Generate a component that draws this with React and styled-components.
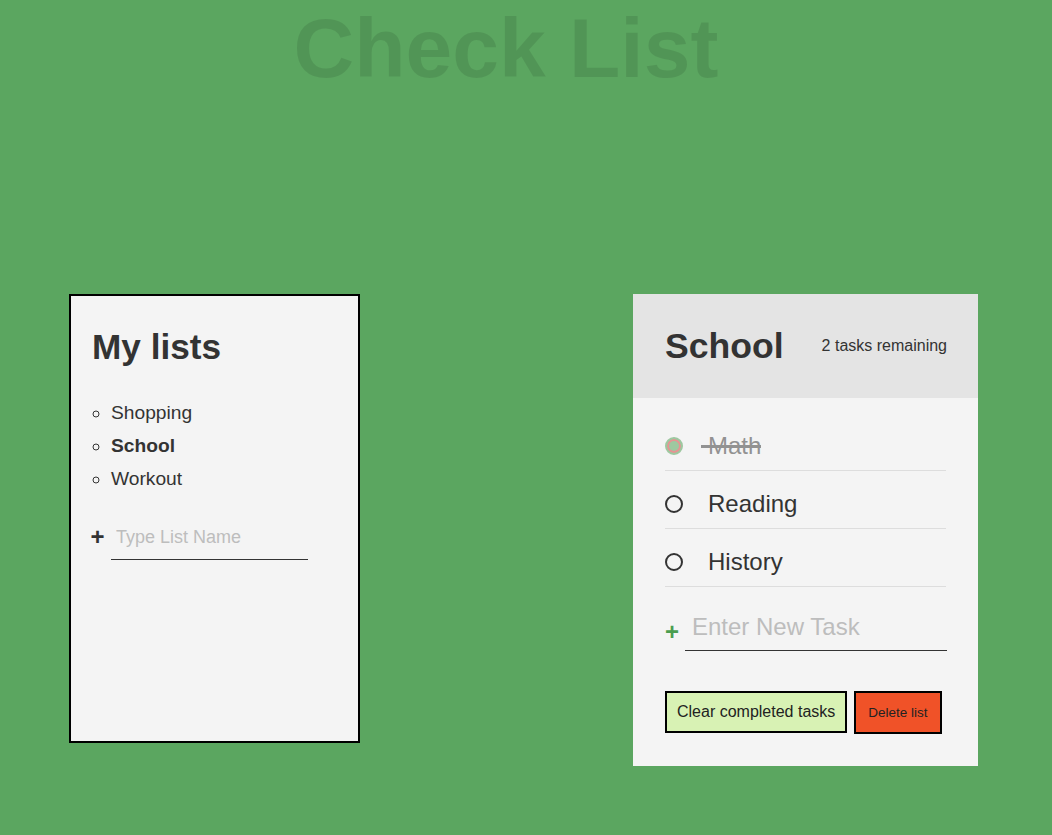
import React, { useState } from "react";
import styled, { createGlobalStyle } from "styled-components";

const GlobalStyle = createGlobalStyle`
  body {
    margin: 0;
    background: #5ba660;
    font-family: "Liberation Sans", Arial, Helvetica, sans-serif;
    color: #333;
  }
  * {
    box-sizing: border-box;
  }
`;

const Page = styled.div`
  padding-top: 6px;
  min-height: 835px;
`;

const Title = styled.h1`
  margin: 0;
  padding-right: 40px;
  text-align: center;
  font-size: 84px;
  line-height: 84px;
  font-weight: 900;
  color: rgba(0, 0, 0, 0.1);
`;

const Board = styled.main`
  display: grid;
  grid-template-columns: 291px 1fr 345px;
  align-items: start;
  margin-top: 204px;
  padding: 0 74px 0 69px;
`;

const ListsPanel = styled.section`
  grid-column: 1;
  min-height: 449px;
  padding: 30px 21px;
  background: #f4f4f4;
  border: 2px solid #000;
`;

const ListsHeading = styled.h2`
  margin: 0 0 29px;
  font-size: 35.2px;
  line-height: 1.2;
  font-weight: 700;
`;

const ListItems = styled.ul`
  margin: 0;
  padding-left: 19px;
  list-style: circle;
  font-size: 19.2px;
  line-height: 1.7;
`;

const ListName = styled.li`
  font-weight: ${(p) => (p.$active ? 700 : 400)};
  cursor: pointer;
`;

const NewForm = styled.form`
  display: flex;
  align-items: center;
  margin-top: ${(p) => p.$top}px;
`;

const CreateBtn = styled.button`
  width: ${(p) => p.$w || 20}px;
  padding: 0 6px 0 0;
  margin-left: ${(p) => p.$shift || 0}px;
  margin-bottom: ${(p) => p.$lift || 0}px;
  background: none;
  border: 0;
  font-family: inherit;
  font-size: 24px;
  font-weight: 900;
  line-height: 1;
  color: ${(p) => p.$color};
  cursor: pointer;
`;

const NewInput = styled.input`
  width: ${(p) => p.$width};
  padding: 0 0 ${(p) => p.$pad}px ${(p) => p.$indent}px;
  background: transparent;
  border: 0;
  border-bottom: 1px solid #333;
  outline: none;
  font-family: inherit;
  font-size: ${(p) => p.$size}px;
  color: inherit;

  &::placeholder {
    color: #bdbdbd;
  }
`;

const TodoPanel = styled.section`
  grid-column: 3;
  background: #f4f4f4;
`;

const TodoHeader = styled.header`
  display: flex;
  align-items: center;
  justify-content: space-between;
  height: 104px;
  padding: 0 31px 0 32px;
  background: #e4e4e4;
`;

const TodoTitle = styled.h2`
  margin: 0;
  font-size: 35.6px;
  font-weight: 700;
`;

const Remaining = styled.p`
  margin: 0;
  font-size: 16px;
`;

const TodoBody = styled.div`
  padding: 15px 32px 32px;
`;

const Task = styled.div`
  display: flex;
  align-items: center;
  height: 58px;
  padding: 19px 0 10px;
  border-bottom: 1px solid #dddddd;
`;

const TaskLabel = styled.label`
  position: relative;
  display: inline-flex;
  align-items: center;
  font-size: 24px;
  line-height: 28px;
  opacity: ${(p) => (p.$done ? 0.5 : 1)};
  cursor: pointer;

  &::after {
    content: "";
    position: absolute;
    left: 36px;
    right: 0;
    top: 50%;
    height: 3px;
    margin-top: -1px;
    background: currentColor;
    transform: scaleX(${(p) => (p.$done ? 1 : 0)});
    transform-origin: right;
  }
`;

const CheckCircle = styled.span`
  display: inline-block;
  width: 18px;
  height: 18px;
  margin-right: 25px;
  border-radius: 50%;
  border: 2px solid ${(p) => (p.$done ? "#4a9d4f" : "currentColor")};
  background: ${(p) => (p.$done ? "#4a9d4f" : "transparent")};
  box-shadow: ${(p) => (p.$done ? "inset 0 0 0 2px #dc3434" : "none")};
`;

const Actions = styled.div`
  display: flex;
  gap: 7px;
  margin-top: 40px;
`;

const ActionBtn = styled.button`
  height: ${(p) => p.$h}px;
  padding: 0 ${(p) => p.$padX}px;
  border: 2px solid #000;
  background: ${(p) => p.$bg};
  font-family: inherit;
  font-size: ${(p) => p.$size}px;
  color: #222;
  cursor: pointer;
`;

const lists = ["Shopping", "School", "Workout"];

const initialTasks = [
  { id: 1, name: "Math", done: true },
  { id: 2, name: "Reading", done: false },
  { id: 3, name: "History", done: false },
];

export default function App() {
  const [tasks, setTasks] = useState(initialTasks);
  const left = tasks.filter((t) => !t.done).length;

  const toggle = (id) =>
    setTasks(tasks.map((t) => (t.id === id ? { ...t, done: !t.done } : t)));

  return (
    <Page>
      <GlobalStyle />
      <Title>Check List</Title>
      <Board>
        <ListsPanel>
          <ListsHeading>My lists</ListsHeading>
          <ListItems>
            {lists.map((name) => (
              <ListName key={name} $active={name === "School"}>
                {name}
              </ListName>
            ))}
          </ListItems>
          <NewForm $top={30} onSubmit={(e) => e.preventDefault()}>
            <CreateBtn
              $color="#333"
              $lift={12}
              $shift={-2}
              $w={21}
              aria-label="create new list"
            >
              +
            </CreateBtn>
            <NewInput
              type="text"
              placeholder="Type List Name"
              $width="197px"
              $size={18}
              $pad={11}
              $indent={5}
            />
          </NewForm>
        </ListsPanel>

        <TodoPanel>
          <TodoHeader>
            <TodoTitle>School</TodoTitle>
            <Remaining>{left} tasks remaining</Remaining>
          </TodoHeader>
          <TodoBody>
            {tasks.map((t) => (
              <Task key={t.id}>
                <TaskLabel $done={t.done} onClick={() => toggle(t.id)}>
                  <CheckCircle $done={t.done} />
                  {t.name}
                </TaskLabel>
              </Task>
            ))}
            <NewForm $top={26} onSubmit={(e) => e.preventDefault()}>
              <CreateBtn $color="#4a9d4f" aria-label="create new task">
                +
              </CreateBtn>
              <NewInput
                type="text"
                placeholder="Enter New Task"
                $width="262px"
                $size={24}
                $pad={9}
                $indent={7}
              />
            </NewForm>
            <Actions>
              <ActionBtn $bg="#d8f2b4" $size={16} $h={42} $padX={10}>
                Clear completed tasks
              </ActionBtn>
              <ActionBtn $bg="#f05228" $size={13.5} $h={43} $padX={12}>
                Delete list
              </ActionBtn>
            </Actions>
          </TodoBody>
        </TodoPanel>
      </Board>
    </Page>
  );
}
